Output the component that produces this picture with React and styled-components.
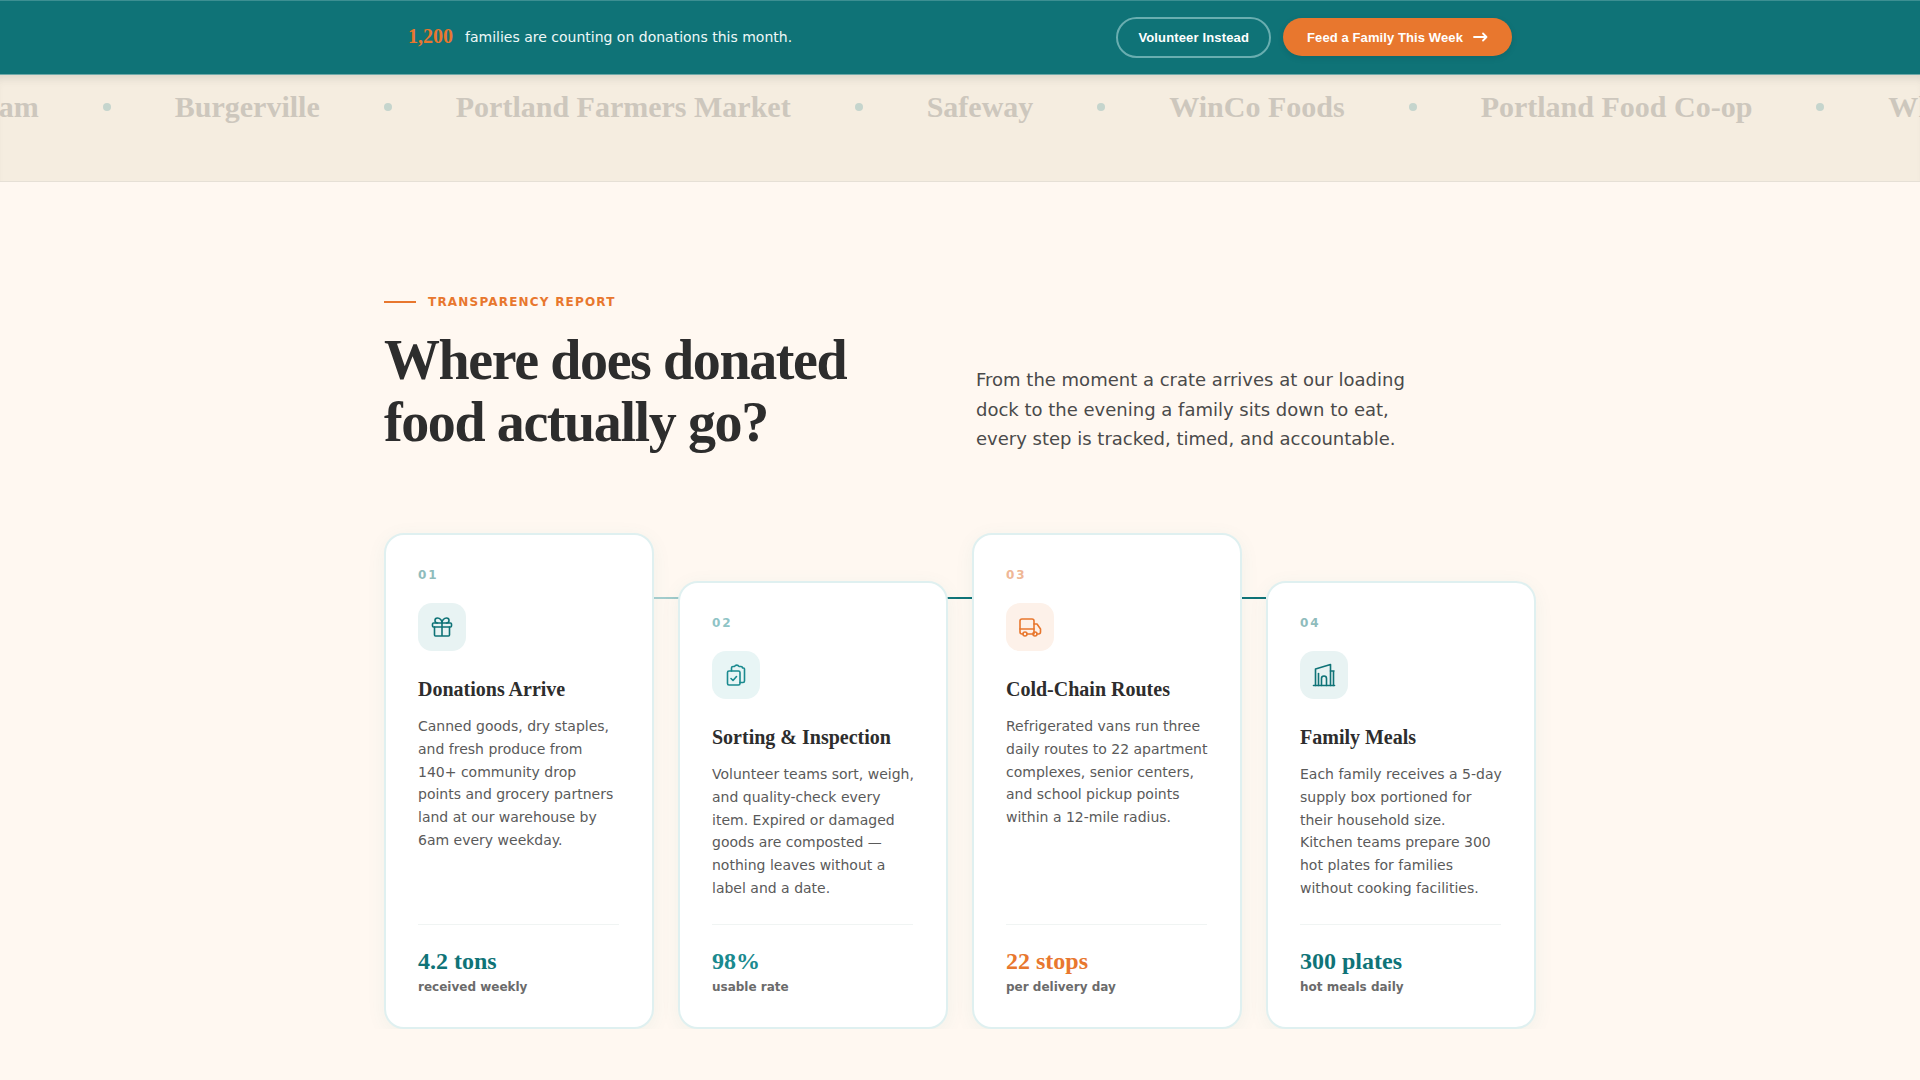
import React from "react";
import styled, { createGlobalStyle } from "styled-components";

const Global = createGlobalStyle`
  html, body { margin: 0; padding: 0; background: #fff8f1; overflow: hidden; }
  * { box-sizing: border-box; }
  body { font-family: "DejaVu Sans", sans-serif; }
`;

const TopBar = styled.header`
  background: #0f7377;
  border-top: 1px solid #3c8f92;
  border-bottom: 1px solid #6fa9a8;
  height: 75px;
  display: flex;
  justify-content: center;
`;
const BarInner = styled.div`
  width: 1152px;
  padding: 0 24px 1px;
  display: flex;
  align-items: center;
  justify-content: space-between;
`;
const Message = styled.p`
  margin: 0;
  padding-bottom: 1px;
  display: flex;
  align-items: center;
  gap: 12px;
  color: #eef8f7;
  font-size: 14px;
`;
const Count = styled.strong`
  font-family: "Liberation Serif", serif;
  font-size: 20px;
  color: #e8772e;
`;
const Actions = styled.div`
  display: flex;
  align-items: center;
  gap: 12px;
`;
const BaseButton = styled.button`
  font-family: "Liberation Sans", sans-serif;
  font-weight: 700;
  font-size: 13px;
  letter-spacing: 0.1px;
  color: #fff;
  border-radius: 999px;
  display: inline-flex;
  align-items: center;
`;
const GhostButton = styled(BaseButton)`
  height: 41px;
  padding: 0 20px;
  letter-spacing: 0.15px;
  background: transparent;
  border: 2px solid #69aeb0;
`;
const PrimaryButton = styled(BaseButton)`
  height: 38px;
  padding: 0 24px;
  gap: 10px;
  background: #e8772e;
  border: none;
  box-shadow: 0 2px 6px rgba(0, 0, 0, 0.1);
`;

const Marquee = styled.div`
  height: 107px;
  background: #f5ede0;
  border-bottom: 1px solid #e6e0d6;
  box-shadow: inset 0 9px 10px -6px rgba(60, 70, 60, 0.15);
  overflow: hidden;
  padding-top: 13px;
`;
const Track = styled.div`
  display: flex;
  align-items: center;
  width: max-content;
  margin-left: -79px;
`;
const Sponsor = styled.span`
  font-family: "Liberation Serif", serif;
  font-weight: 700;
  font-size: 30px;
  line-height: 38px;
  color: #cdc7bd;
  white-space: nowrap;
`;
const Dot = styled.span`
  width: 8px;
  height: 8px;
  margin: 0 64px;
  border-radius: 50%;
  background: #c5d5cd;
`;

const Section = styled.main`
  width: 1152px;
  margin: 0 auto;
  padding-top: 113px;
`;
const Header = styled.div`
  display: grid;
  grid-template-columns: 1fr 1fr;
  gap: 32px;
  align-items: end;
  margin-bottom: 80px;
`;
const Eyebrow = styled.div`
  display: flex;
  align-items: center;
  gap: 12px;
  color: #e8772e;
  font-size: 12px;
  font-weight: 700;
  letter-spacing: 1.2px;
  margin-bottom: 20px;
  &::before {
    content: "";
    width: 32px;
    height: 2px;
    background: #e8772e;
  }
`;
const Title = styled.h2`
  margin: 0;
  font-family: "Liberation Serif", serif;
  font-weight: 700;
  font-size: 56px;
  line-height: 62px;
  letter-spacing: -1.4px;
  color: #2d2d2d;
`;
const Intro = styled.p`
  margin: 0 0 -1px;
  max-width: 460px;
  font-size: 18px;
  line-height: 29.7px;
  color: #4a4a4a;
`;
const Steps = styled.div`
  position: relative;
  display: grid;
  grid-template-columns: repeat(4, 1fr);
  gap: 24px;
  height: 496px;
  &::before {
    content: "";
    position: absolute;
    left: 270px;
    right: 270px;
    top: 64px;
    height: 2px;
    background: linear-gradient(90deg, #a9d0d0, #0f7377 50%, #0f7377);
  }
`;
const Card = styled.article`
  position: relative;
  display: flex;
  flex-direction: column;
  margin-top: ${(p) => (p.$low ? "48px" : "0")};
  padding: 32px;
  background: #fff;
  border: 2px solid #dff0f0;
  border-radius: 20px;
  box-shadow: 0 4px 20px rgba(15, 115, 119, 0.06);
`;
const Num = styled.div`
  font-size: 12px;
  line-height: 16px;
  font-weight: 700;
  letter-spacing: 1.8px;
  color: ${(p) => p.$color};
  margin-bottom: 20px;
`;
const IconTile = styled.div`
  width: 48px;
  height: 48px;
  border-radius: 14px;
  background: ${(p) => p.$bg};
  color: ${(p) => p.$color};
  display: flex;
  align-items: center;
  justify-content: center;
  margin-bottom: 25px;
`;
const CardTitle = styled.h3`
  margin: 0 0 13px;
  font-family: "Liberation Serif", serif;
  font-weight: 700;
  font-size: 20px;
  line-height: 26px;
  color: #2d2d2d;
`;
const Body = styled.p`
  margin: 0;
  font-size: 14px;
  line-height: 22.75px;
  color: #5a5a5a;
`;
const Footer = styled.div`
  margin-top: auto;
  margin-right: 1px;
  padding-top: 22px;
  border-top: 1px solid #f0f4f3;
`;
const Stat = styled.div`
  font-family: "Liberation Serif", serif;
  font-weight: 700;
  font-size: 24px;
  line-height: 28px;
  color: ${(p) => p.$color};
`;
const StatLabel = styled.div`
  font-size: 12px;
  line-height: 18px;
  font-weight: 700;
  color: #6b6b6b;
  margin-top: 2px;
  position: relative;
  top: 1px;
`;

const Svg = ({ children }) => (
  <svg width="24" height="24" viewBox="0 0 24 24" fill="none" stroke="currentColor" strokeWidth="1.6" strokeLinecap="round" strokeLinejoin="round">
    {children}
  </svg>
);
const GiftIcon = () => (
  <Svg>
    <rect x="2.5" y="8" width="19" height="4" rx="1" />
    <path d="M4.5 12v8a1 1 0 0 0 1 1h13a1 1 0 0 0 1-1v-8M12 8v13" />
    <path d="M7.5 8a2.5 2.5 0 0 1 0-5C10 3 12 5.5 12 8c0-2.5 2-5 4.5-5a2.5 2.5 0 0 1 0 5" />
  </Svg>
);
const ClipIcon = () => (
  <Svg>
    <rect x="3.5" y="8" width="12.5" height="14" rx="1.5" />
    <path d="M7.5 8V5a1.5 1.5 0 0 1 1.5-1.5h1.5a2.5 2.5 0 0 1 4.5 0h2A1.5 1.5 0 0 1 18.5 5 l1 0a1 1 0 0 1 1 1v12a1.5 1.5 0 0 1-1.5 1.5h-3" />
    <path d="m7 15.5 2 2 3.5-4" />
  </Svg>
);
const TruckIcon = () => (
  <Svg>
    <path d="M5 19H4a2 2 0 0 1-2-2V6a2 2 0 0 1 2-2h10a2 2 0 0 1 2 2v13" />
    <path d="M2 14h14M9 19h6" />
    <path d="M16 9h3l3.5 5v3a2 2 0 0 1-2 2h-1" />
    <circle cx="7" cy="19" r="2" />
    <circle cx="17" cy="19" r="2" />
  </Svg>
);
const BuildIcon = () => (
  <Svg>
    <path d="M1.5 22.5h21" />
    <path d="M3.5 22.5V6l15-4.5v21" />
    <path d="M6.5 22.5v-12" />
    <path d="M18.5 8h3.5M21.5 8v14.5" />
    <path d="M9.5 22.5v-7a2.5 2.5 0 0 1 5 0v7" />
  </Svg>
);
const ArrowIcon = () => (
  <svg width="15" height="10" viewBox="0 0 15 10" fill="none" stroke="currentColor" strokeWidth="1.8" strokeLinecap="round" strokeLinejoin="round">
    <path d="M1 5h12.5M10 1.5 13.5 5 10 8.5" />
  </svg>
);

const sponsors = ["Gresham", "Burgerville", "Portland Farmers Market", "Safeway", "WinCo Foods", "Portland Food Co-op", "Whole Foods"];

const TEAL = "#0f7377";
const steps = [
  { n: "01", nc: "#8fbcbc", bg: "#e8f3f3", ic: TEAL, icon: <GiftIcon />, title: "Donations Arrive", body: "Canned goods, dry staples, and fresh produce from 140+ community drop points and grocery partners land at our warehouse by 6am every weekday.", stat: "4.2 tons", sc: TEAL, label: "received weekly" },
  { n: "02", nc: "#8fc4c6", bg: "#e8f5f5", ic: "#1a8a8f", icon: <ClipIcon />, title: "Sorting & Inspection", body: "Volunteer teams sort, weigh, and quality-check every item. Expired or damaged goods are composted — nothing leaves without a label and a date.", stat: "98%", sc: "#1a8a8f", label: "usable rate", low: true },
  { n: "03", nc: "#efb796", bg: "#fdf1e9", ic: "#e8772e", icon: <TruckIcon />, title: "Cold-Chain Routes", body: "Refrigerated vans run three daily routes to 22 apartment complexes, senior centers, and school pickup points within a 12-mile radius.", stat: "22 stops", sc: "#e8772e", label: "per delivery day" },
  { n: "04", nc: "#8fbcbc", bg: "#e8f3f3", ic: TEAL, icon: <BuildIcon />, title: "Family Meals", body: "Each family receives a 5-day supply box portioned for their household size. Kitchen teams prepare 300 hot plates for families without cooking facilities.", stat: "300 plates", sc: TEAL, label: "hot meals daily", low: true },
];

export default function App() {
  return (
    <>
      <Global />
      <TopBar>
        <BarInner>
          <Message>
            <Count>1,200</Count>
            families are counting on donations this month.
          </Message>
          <Actions>
            <GhostButton>Volunteer Instead</GhostButton>
            <PrimaryButton>
              Feed a Family This Week <ArrowIcon />
            </PrimaryButton>
          </Actions>
        </BarInner>
      </TopBar>
      <Marquee>
        <Track>
          {sponsors.map((s, i) => (
            <React.Fragment key={s}>
              <Sponsor>{s}</Sponsor>
              {i < sponsors.length - 1 && <Dot />}
            </React.Fragment>
          ))}
        </Track>
      </Marquee>
      <Section>
        <Header>
          <div>
            <Eyebrow>TRANSPARENCY REPORT</Eyebrow>
            <Title>
              Where does donated
              <br />
              food actually go?
            </Title>
          </div>
          <Intro>
            From the moment a crate arrives at our loading dock to the evening a family sits down to eat, every step is tracked, timed, and accountable.
          </Intro>
        </Header>
        <Steps>
          {steps.map((s) => (
            <Card key={s.n} $low={s.low}>
              <Num $color={s.nc}>{s.n}</Num>
              <IconTile $bg={s.bg} $color={s.ic}>{s.icon}</IconTile>
              <CardTitle>{s.title}</CardTitle>
              <Body>{s.body}</Body>
              <Footer>
                <Stat $color={s.sc}>{s.stat}</Stat>
                <StatLabel>{s.label}</StatLabel>
              </Footer>
            </Card>
          ))}
        </Steps>
      </Section>
    </>
  );
}
